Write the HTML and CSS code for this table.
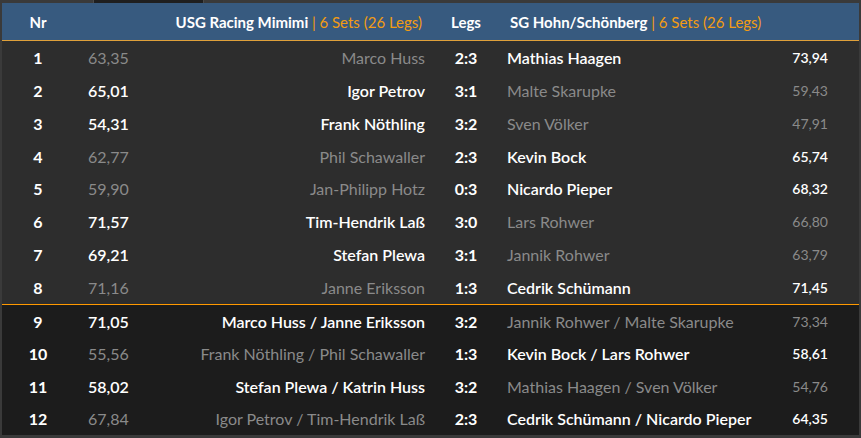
FILE: index.html
```html
<!DOCTYPE html>
<html lang="de">
<head>
<meta charset="utf-8">
<title>Spielbericht</title>
<link rel="stylesheet" href="styles.css">
</head>
<body>
<div class="page">
  <div class="tabs"><div class="tab"></div></div>
  <div class="board">
    <div class="head">
      <div class="c-nr">Nr</div>
      <div class="c-team-l">USG Racing Mimimi <span class="sets">| 6 Sets (26 Legs)</span></div>
      <div class="c-legs">Legs</div>
      <div class="c-team-r">SG Hohn/Schönberg <span class="sets">| 6 Sets (26 Legs)</span></div>
    </div>
    <div class="group singles">
      <div class="row right-win"><div class="c-nr">1</div><div class="c-avg-l">63,35</div><div class="c-name-l">Marco Huss</div><div class="c-legs">2:3</div><div class="c-name-r">Mathias Haagen</div><div class="c-avg-r">73,94</div></div>
      <div class="row left-win"><div class="c-nr">2</div><div class="c-avg-l">65,01</div><div class="c-name-l">Igor Petrov</div><div class="c-legs">3:1</div><div class="c-name-r">Malte Skarupke</div><div class="c-avg-r">59,43</div></div>
      <div class="row left-win"><div class="c-nr">3</div><div class="c-avg-l">54,31</div><div class="c-name-l">Frank Nöthling</div><div class="c-legs">3:2</div><div class="c-name-r">Sven Völker</div><div class="c-avg-r">47,91</div></div>
      <div class="row right-win"><div class="c-nr">4</div><div class="c-avg-l">62,77</div><div class="c-name-l">Phil Schawaller</div><div class="c-legs">2:3</div><div class="c-name-r">Kevin Bock</div><div class="c-avg-r">65,74</div></div>
      <div class="row right-win"><div class="c-nr">5</div><div class="c-avg-l">59,90</div><div class="c-name-l">Jan-Philipp Hotz</div><div class="c-legs">0:3</div><div class="c-name-r">Nicardo Pieper</div><div class="c-avg-r">68,32</div></div>
      <div class="row left-win"><div class="c-nr">6</div><div class="c-avg-l">71,57</div><div class="c-name-l">Tim-Hendrik Laß</div><div class="c-legs">3:0</div><div class="c-name-r">Lars Rohwer</div><div class="c-avg-r">66,80</div></div>
      <div class="row left-win"><div class="c-nr">7</div><div class="c-avg-l">69,21</div><div class="c-name-l">Stefan Plewa</div><div class="c-legs">3:1</div><div class="c-name-r">Jannik Rohwer</div><div class="c-avg-r">63,79</div></div>
      <div class="row right-win"><div class="c-nr">8</div><div class="c-avg-l">71,16</div><div class="c-name-l">Janne Eriksson</div><div class="c-legs">1:3</div><div class="c-name-r">Cedrik Schümann</div><div class="c-avg-r">71,45</div></div>
    </div>
    <div class="group doubles">
      <div class="row left-win"><div class="c-nr">9</div><div class="c-avg-l">71,05</div><div class="c-name-l">Marco Huss / Janne Eriksson</div><div class="c-legs">3:2</div><div class="c-name-r">Jannik Rohwer / Malte Skarupke</div><div class="c-avg-r">73,34</div></div>
      <div class="row right-win"><div class="c-nr">10</div><div class="c-avg-l">55,56</div><div class="c-name-l">Frank Nöthling / Phil Schawaller</div><div class="c-legs">1:3</div><div class="c-name-r">Kevin Bock / Lars Rohwer</div><div class="c-avg-r">58,61</div></div>
      <div class="row left-win"><div class="c-nr">11</div><div class="c-avg-l">58,02</div><div class="c-name-l">Stefan Plewa / Katrin Huss</div><div class="c-legs">3:2</div><div class="c-name-r">Mathias Haagen / Sven Völker</div><div class="c-avg-r">54,76</div></div>
      <div class="row right-win"><div class="c-nr">12</div><div class="c-avg-l">67,84</div><div class="c-name-l">Igor Petrov / Tim-Hendrik Laß</div><div class="c-legs">2:3</div><div class="c-name-r">Cedrik Schümann / Nicardo Pieper</div><div class="c-avg-r">64,35</div></div>
    </div>
  </div>
</div>
</body>
</html>
```
FILE: styles.css
```css
html, body {
  margin: 0;
  padding: 0;
  background: #3a3a3a;
}
body {
  font-family: Lato, "Open Sans", sans-serif;
  font-size: 16px;
  color: #ffffff;
}
.page {
  padding: 0 2px 3px 2px;
}
.tabs {
  height: 3px;
  display: flex;
}
.tab {
  margin-left: 92px;
  width: 109px;
  height: 3px;
  background: #1f1f1f;
  box-shadow: -1px 0 0 #4a4a4a, 1px 0 0 #4a4a4a;
}
.board {
  width: 857px;
}
.head {
  display: grid;
  grid-template-columns: 72px 351px 82px 352px;
  height: 37px;
  align-items: center;
  background: #375a7f;
  border-bottom: 1px solid #dfa03a;
  font-size: 15px;
  font-weight: 700;
}
.head .c-team-l {
  text-align: right;
  padding-right: 3px;
}
.head .c-team-r {
  padding-left: 3px;
}
.sets {
  color: #f39c12;
  font-weight: 400;
}
.row {
  display: grid;
  grid-template-columns: 72px 126px 225px 82px 254px 98px;
  height: 32.875px;
  align-items: center;
  white-space: nowrap;
}
.singles {
  background: #2d2d2d;
  height: 263px;
}
.doubles {
  background: #1c1c1c;
  border-top: 1px solid #ff9900;
}
.doubles .row {
  height: 32.5px;
}
.c-nr, .c-legs {
  text-align: center;
  font-weight: 700;
}
.c-avg-l {
  padding-left: 14px;
}
.c-name-l {
  text-align: right;
}
.c-avg-r {
  text-align: right;
  padding-right: 31px;
  font-size: 14px;
}
.row .c-avg-l, .row .c-name-l, .row .c-name-r, .row .c-avg-r {
  color: #8a8a8a;
  font-weight: 400;
}
.left-win .c-avg-l, .left-win .c-name-l,
.right-win .c-name-r, .right-win .c-avg-r {
  color: #ffffff;
  font-weight: 600;
}
```
